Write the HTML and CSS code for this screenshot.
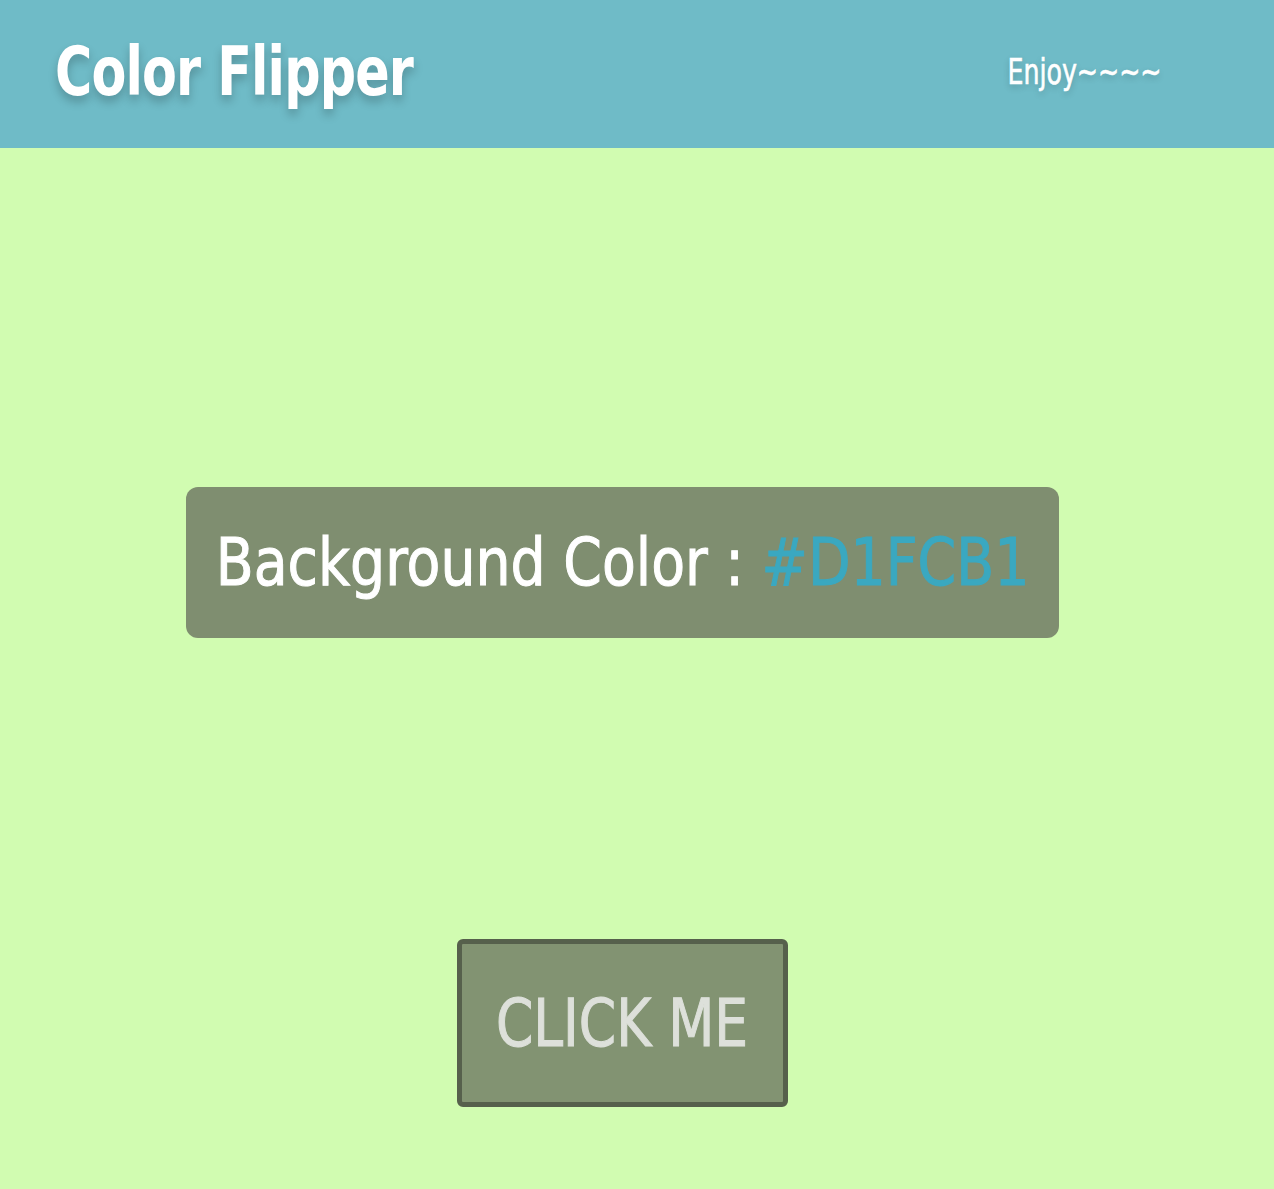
FILE: index.html
```html
<!DOCTYPE html>
<html>
<head>
<meta charset="utf-8">
<title>Color Flipper</title>
<link rel="stylesheet" href="styles.css">
</head>
<body>
<header class="nav">
  <h1 class="title">Color Flipper</h1>
  <p class="enjoy">Enjoy~~~~</p>
</header>
<main class="main">
  <div class="panel">
    <h2 class="label">Background Color : <span class="hex">#D1FCB1</span></h2>
  </div>
  <button class="btn"><span class="btn-text">CLICK ME</span></button>
</main>
</body>
</html>
```

FILE: styles.css
```css
html, body {
  margin: 0;
  padding: 0;
}
body {
  background: #d1fcb1;
  font-family: "DejaVu Sans Condensed", "DejaVu Sans", sans-serif;
  height: 1189px;
  overflow: hidden;
}
.nav {
  height: 148px;
  background: #6fbbc7;
  display: flex;
  align-items: center;
  justify-content: space-between;
  padding: 0 112px 0 55px;
}
.title {
  margin: 0 0 6px;
  color: #fff;
  font-size: 68px;
  font-weight: 700;
  letter-spacing: -1px;
  white-space: nowrap;
  transform: scaleX(0.83);
  transform-origin: left center;
  text-shadow: 0 6px 10px rgba(0, 0, 0, 0.22);
}
.enjoy {
  margin: 0 0 6px;
  color: #fff;
  font-size: 36px;
  white-space: nowrap;
  -webkit-text-stroke: 0.6px currentColor;
  transform: scaleX(0.78);
  transform-origin: right center;
  text-shadow: 0 3px 8px rgba(0, 0, 0, 0.2);
}
.main {
  display: flex;
  flex-direction: column;
  align-items: center;
  width: 1245px;
  padding-top: 339px;
}
.panel {
  width: 873px;
  height: 151px;
  box-sizing: border-box;
  background: #7f8e70;
  border-radius: 12px;
  display: flex;
  align-items: center;
  justify-content: center;
}
.label {
  margin: 0;
  color: #fff;
  font-size: 66px;
  font-weight: 400;
  white-space: nowrap;
  -webkit-text-stroke: 1px currentColor;
  transform: scaleX(0.932);
  transform-origin: center;
}
.hex {
  color: #3aa8c0;
}
.btn {
  margin-top: 301px;
  width: 331px;
  height: 168px;
  box-sizing: border-box;
  border: 5px solid #56604c;
  border-radius: 6px;
  background: #829372;
  color: #dde0da;
  font-family: inherit;
  font-size: 66px;
  padding: 0;
  display: flex;
  align-items: center;
  justify-content: center;
}
.btn-text {
  display: inline-block;
  white-space: nowrap;
  -webkit-text-stroke: 1px currentColor;
  transform: scaleX(0.9);
}
```
